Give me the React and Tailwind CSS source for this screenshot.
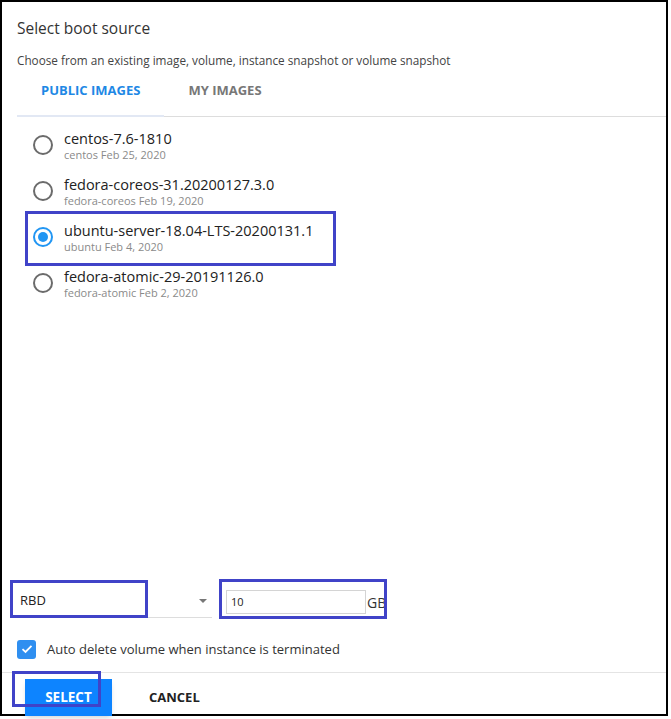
import React, { useState } from 'react';

const images = [
  { name: 'centos-7.6-1810', meta: 'centos Feb 25, 2020' },
  { name: 'fedora-coreos-31.20200127.3.0', meta: 'fedora-coreos Feb 19, 2020' },
  { name: 'ubuntu-server-18.04-LTS-20200131.1', meta: 'ubuntu Feb 4, 2020' },
  { name: 'fedora-atomic-29-20191126.0', meta: 'fedora-atomic Feb 2, 2020' },
];

export default function App() {
  const [selected, setSelected] = useState(2);
  const [tab, setTab] = useState('public');
  const [autoDelete, setAutoDelete] = useState(true);

  return (
    <div className="w-[671px] h-[719px] bg-white font-['Open_Sans',sans-serif]">
      <div className="relative w-[668px] h-[716px] border-2 border-black flex flex-col">
        {/* Header */}
        <div className="pl-[15px] pt-[16px]">
          <h1 className="text-[15.5px] leading-[20px] text-[#333]">Select boot source</h1>
          <p className="mt-[15px] text-[11.75px] leading-[14px] text-[#444]">
            Choose from an existing image, volume, instance snapshot or volume snapshot
          </p>
        </div>

        {/* Tabs */}
        <div className="mt-[13px] ml-[15px] flex border-b border-[#ddd]">
          <button
            onClick={() => setTab('public')}
            className={`px-[24px] pb-[16px] pt-[1px] text-[13px] leading-[18px] font-bold border-b-2 -mb-px ${tab === 'public' ? 'text-[#1e88e5] border-[#e2e8f4]' : 'text-[#777] border-transparent'}`}
          >
            PUBLIC IMAGES
          </button>
          <button
            onClick={() => setTab('mine')}
            className={`px-[24px] pb-[16px] pt-[1px] text-[13px] leading-[18px] font-bold border-b-2 -mb-px ${tab === 'mine' ? 'text-[#1e88e5] border-[#e2e8f4]' : 'text-[#777] border-transparent'}`}
          >
            MY IMAGES
          </button>
        </div>

        {/* Image list */}
        <div className="flex-1 pt-[10px] pl-[31px] flex flex-col gap-[10px]">
          {images.map((img, i) => (
            <div key={img.name} className="relative flex items-center gap-[11px] h-[36px] cursor-pointer" onClick={() => setSelected(i)}>
              {selected === i ? (
                <span className="w-[20px] h-[20px] rounded-full border-2 border-[#2196f3] flex items-center justify-center">
                  <span className="w-[10px] h-[10px] rounded-full bg-[#2196f3]" />
                </span>
              ) : (
                <span className="w-[20px] h-[20px] rounded-full border-2 border-[#6b6b6b]" />
              )}
              <div className="flex flex-col">
                <span className="text-[14.5px] leading-[18px] text-[#222]">{img.name}</span>
                <span className="text-[11px] leading-[13px] text-[#8a8a8a]">{img.meta}</span>
              </div>
              {i === 2 && (
                <div className="absolute left-[-8px] top-[-8px] w-[311px] h-[55px] border-[3px] border-[#4043c8] pointer-events-none" />
              )}
            </div>
          ))}
        </div>

        {/* Volume options */}
        <div className="relative flex items-end pl-[8px] h-[40px]">
          <div className="relative w-[202px] h-[32px] border-b border-[#ddd] flex items-center justify-between pl-[10px] pr-[4px]">
            <span className="text-[13px] text-[#222]">RBD</span>
            <svg width="8" height="4" viewBox="0 0 8 4" className="mr-[1px]">
              <path d="M0 0h8L4 4z" fill="#777" />
            </svg>
            <div className="absolute left-0 top-[-6px] w-[138px] h-[38px] border-[3px] border-[#4043c8] pointer-events-none" />
          </div>
          <div className="relative ml-[14px] mb-[4px] flex items-end">
            <input
              defaultValue="10"
              className="w-[140px] h-[24px] border border-[#d4d4d4] px-[4px] text-[11px] text-[#222] outline-none"
            />
            <span className="ml-[1px] text-[14px] text-[#333] leading-[22px]">GB</span>
            <div className="absolute left-[-7px] top-[-11px] w-[168px] h-[40px] border-[3px] border-[#4043c8] pointer-events-none" />
          </div>
        </div>

        <label className="mt-[22px] ml-[15px] flex items-center gap-[11px] cursor-pointer">
          <span
            onClick={() => setAutoDelete(!autoDelete)}
            className={`w-[19px] h-[19px] rounded-[3px] flex items-center justify-center ${autoDelete ? 'bg-[#2f8ff0]' : 'border-2 border-[#777]'}`}
          >
            {autoDelete && (
              <svg width="12" height="10" viewBox="0 0 12 10">
                <path d="M1.5 5.2 4.5 8 10.5 1.8" stroke="#fff" strokeWidth="1.8" fill="none" />
              </svg>
            )}
          </span>
          <span className="text-[13px] text-[#333]">Auto delete volume when instance is terminated</span>
        </label>

        {/* Footer */}
        <div className="mt-[13px] border-t border-[#e4e4e4] h-[42px] flex items-start pt-[6px] pl-[23px]">
          <div className="relative z-10">
            <button className="w-[87px] h-[37px] bg-[#0d84ff] text-white text-[13.5px] font-bold shadow-md">SELECT</button>
            <div className="absolute left-[-13px] top-[-8px] w-[89px] h-[36px] border-[3px] border-[#4043c8] pointer-events-none" />
          </div>
          <button className="ml-[37px] h-[37px] text-[13px] font-bold text-[#222]">CANCEL</button>
        </div>
      </div>
    </div>
  );
}
